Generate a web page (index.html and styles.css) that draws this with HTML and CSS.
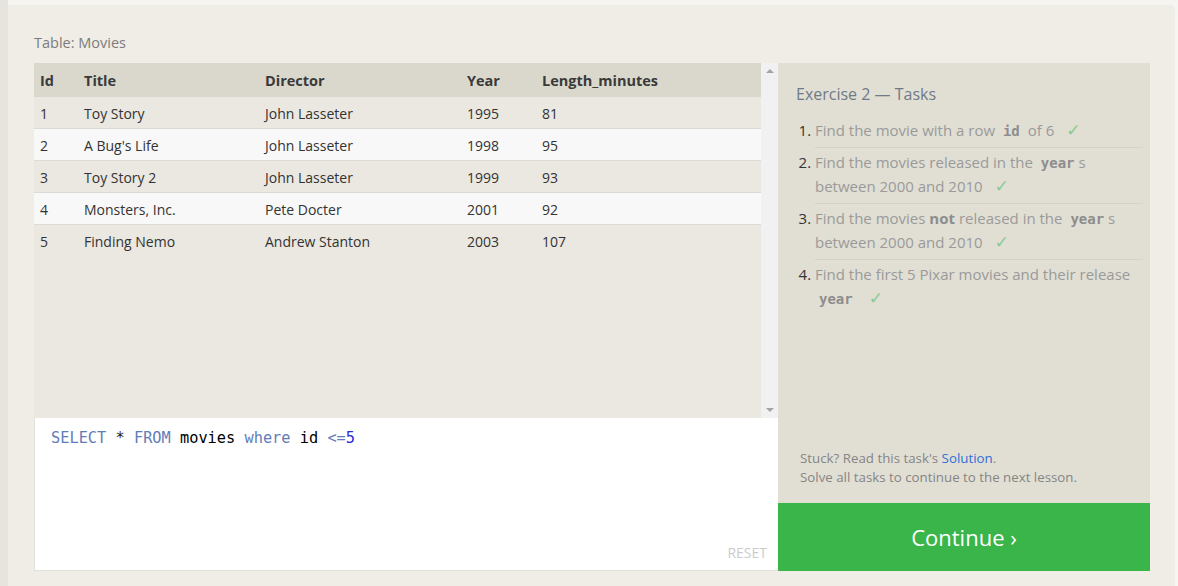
FILE: index.html
```html
<!DOCTYPE html>
<html>
<head>
<meta charset="utf-8">
<link rel="stylesheet" href="styles.css">
</head>
<body>
<div class="page">
  <div class="side-strip"></div>
  <main class="lesson">
    <div class="table-label">Table: Movies</div>
    <div class="exercise">
      <div class="left-col">
        <div class="results">
          <div class="results-scroll">
            <table class="data">
              <colgroup>
                <col class="c-id"><col class="c-title"><col class="c-dir"><col class="c-year"><col>
              </colgroup>
              <thead>
                <tr><th>Id</th><th>Title</th><th>Director</th><th>Year</th><th>Length_minutes</th></tr>
              </thead>
              <tbody>
                <tr><td>1</td><td>Toy Story</td><td>John Lasseter</td><td>1995</td><td>81</td></tr>
                <tr><td>2</td><td>A Bug's Life</td><td>John Lasseter</td><td>1998</td><td>95</td></tr>
                <tr><td>3</td><td>Toy Story 2</td><td>John Lasseter</td><td>1999</td><td>93</td></tr>
                <tr><td>4</td><td>Monsters, Inc.</td><td>Pete Docter</td><td>2001</td><td>92</td></tr>
                <tr><td>5</td><td>Finding Nemo</td><td>Andrew Stanton</td><td>2003</td><td>107</td></tr>
              </tbody>
            </table>
          </div>
          <div class="scrollbar">
            <span class="arrow arrow-up"></span>
            <span class="arrow arrow-down"></span>
          </div>
        </div>
        <div class="editor">
          <div class="code"><span class="kw">SELECT</span> <span class="op">*</span> <span class="kw">FROM</span> <span class="id">movies</span> <span class="kw">where</span> <span class="id">id</span> <span class="kw">&lt;=</span><span class="num">5</span></div>
          <div class="reset">RESET</div>
        </div>
      </div>
      <div class="right-col">
        <div class="tasks">
          <h2 class="tasks-title">Exercise 2 — Tasks</h2>
          <ol class="task-list">
            <li>Find the movie with a row <code>id</code> of 6 <span class="check">✓</span></li>
            <li>Find the movies released in the <code>year</code>s between 2000 and 2010 <span class="check">✓</span></li>
            <li>Find the movies <b>not</b> released in the <code>year</code>s between 2000 and 2010 <span class="check">✓</span></li>
            <li>Find the first 5 Pixar movies and their release <code>year</code> <span class="check">✓</span></li>
          </ol>
          <div class="help">
            <div>Stuck? Read this task's <a class="link">Solution</a>.</div>
            <div>Solve all tasks to continue to the next lesson.</div>
          </div>
        </div>
        <div class="continue">Continue ›</div>
      </div>
    </div>
  </main>
</div>
</body>
</html>
```

FILE: styles.css
```css
html, body {
  margin: 0;
  padding: 0;
}
body {
  background: #f6f5f1;
  font-family: "Open Sans", "Noto Sans", sans-serif;
  color: #333;
  width: 1178px;
  height: 586px;
  overflow: hidden;
}
.page {
  display: flex;
  height: 586px;
}
.side-strip {
  width: 8px;
  background: #e6e4de;
  flex: none;
}
.lesson {
  margin-top: 5px;
  width: 1167px;
  background: #efede6;
  border-top-right-radius: 5px;
  padding: 28px 0 0 26px;
  box-sizing: border-box;
}
.table-label {
  font-size: 14.5px;
  line-height: 20px;
  color: #7c7c7c;
  margin-bottom: 10px;
}
.exercise {
  display: flex;
  width: 1116px;
}
.left-col {
  width: 744px;
  display: flex;
  flex-direction: column;
}
.results {
  height: 355px;
  display: flex;
  background: #eae8e1;
}
.results-scroll {
  flex: 1;
}
.data {
  width: 100%;
  border-collapse: collapse;
  table-layout: fixed;
  font-size: 14px;
}
.c-id { width: 44px; }
.c-title { width: 181px; }
.c-dir { width: 202px; }
.c-year { width: 75px; }
.data th {
  background: #dad8cd;
  text-align: left;
  font-weight: 700;
  height: 34px;
  padding: 0 0 0 6px;
  color: #3a3a3a;
  font-size: 14.5px;
}
.data td {
  height: 29px;
  padding: 2px 0 0 6px;
  border-bottom: 1px solid #dcdad4;
  color: #333;
}
.data tbody tr:nth-child(odd) td { background: #eae8e1; }
.data tbody tr:nth-child(even) td { background: #f8f8f8; }
.data tbody tr:last-child td { border-bottom: none; }
.scrollbar {
  width: 17px;
  background: #f1f1f1;
  display: flex;
  flex-direction: column;
  justify-content: space-between;
  align-items: center;
  padding: 6px 0 6px;
  box-sizing: border-box;
}
.arrow {
  width: 0;
  height: 0;
  border-left: 4px solid transparent;
  border-right: 4px solid transparent;
}
.arrow-up { border-bottom: 4px solid #a3a3a3; }
.arrow-down { border-top: 4px solid #a3a3a3; }
.editor {
  height: 153px;
  background: #fff;
  border-left: 1px solid #e2e0da;
  border-bottom: 1px solid #e2e0da;
  box-sizing: border-box;
  display: flex;
  flex-direction: column;
  justify-content: space-between;
  padding: 9px 11px 8px 16px;
}
.code {
  font-family: "DejaVu Sans Mono", "Liberation Mono", monospace;
  font-size: 15.3px;
  line-height: 22px;
  color: #111;
}
.kw { color: #617db9; }
.op { color: #222; }
.id { color: #000; }
.num { color: #2b2bd9; }
.reset {
  align-self: flex-end;
  font-size: 14px;
  color: #cccccc;
  line-height: 18px;
}
.right-col {
  width: 372px;
  display: flex;
  flex-direction: column;
}
.tasks {
  flex: 1;
  background: #e1dfd4;
  padding: 20px 7px 16px 18px;
  display: flex;
  flex-direction: column;
}
.tasks-title {
  margin: 0 0 11px;
  font-size: 16px;
  font-weight: 400;
  line-height: 22px;
  color: #707a88;
}
.task-list {
  margin: 0;
  padding: 0 0 0 19px;
  flex: 1;
}
.task-list li {
  font-size: 15px;
  line-height: 24px;
  color: #9a9a9a;
  padding: 2px 0 5px;
  border-bottom: 1px solid #d4d2c8;
}
.task-list li:last-child { border-bottom: none; }
.task-list li::marker { color: #333; }
.task-list code {
  font-family: "DejaVu Sans Mono", "Liberation Mono", monospace;
  font-weight: 700;
  font-size: 14px;
  line-height: 1;
  color: #8d8d8d;
  padding: 0 4px;
}
.task-list b { color: #8d8d8d; }
.check {
  color: #86cc90;
  margin-left: 8px;
  font-size: 17px;
  line-height: 1;
  font-family: "DejaVu Sans", sans-serif;
}
.help {
  font-size: 13.3px;
  line-height: 19px;
  color: #858585;
  padding-left: 4px;
}
.link { color: #2f6fd8; }
.continue {
  height: 68px;
  background: #3ab54a;
  color: #fff;
  font-size: 22px;
  display: flex;
  align-items: center;
  justify-content: center;
}
```
